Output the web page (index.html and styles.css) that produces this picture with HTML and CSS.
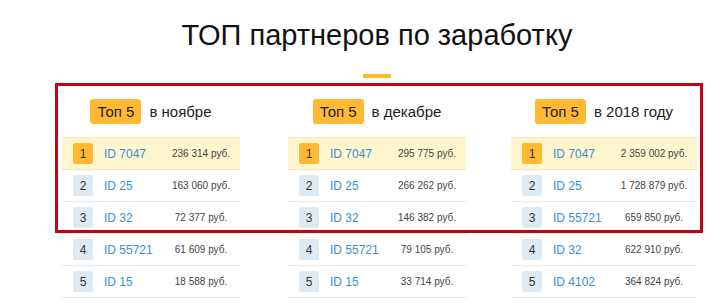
FILE: index.html
```html
<!DOCTYPE html>
<html lang="ru">
<head>
<meta charset="utf-8">
<title>ТОП партнеров по заработку</title>
<link rel="stylesheet" href="styles.css">
</head>
<body>
<div class="page">
  <h1 class="title">ТОП партнеров по заработку</h1>
  <div class="title-bar"></div>
  <div class="boards">
    <div class="board board--a">
      <div class="board-head"><span class="badge">Топ 5</span><span class="period">в ноябре</span></div>
      <div class="rows rows--a">
        <div class="row row--first"><span class="num num--gold">1</span><a class="pid">ID 7047</a><span class="sum">236 314 руб.</span></div>
        <div class="row"><span class="num">2</span><a class="pid">ID 25</a><span class="sum">163 060 руб.</span></div>
        <div class="row"><span class="num">3</span><a class="pid">ID 32</a><span class="sum">72 377 руб.</span></div>
        <div class="row"><span class="num">4</span><a class="pid">ID 55721</a><span class="sum">61 609 руб.</span></div>
        <div class="row"><span class="num">5</span><a class="pid">ID 15</a><span class="sum">18 588 руб.</span></div>
      </div>
    </div>
    <div class="board board--b">
      <div class="board-head"><span class="badge">Топ 5</span><span class="period">в декабре</span></div>
      <div class="rows rows--b">
        <div class="row row--first"><span class="num num--gold">1</span><a class="pid">ID 7047</a><span class="sum">295 775 руб.</span></div>
        <div class="row"><span class="num">2</span><a class="pid">ID 25</a><span class="sum">266 262 руб.</span></div>
        <div class="row"><span class="num">3</span><a class="pid">ID 32</a><span class="sum">146 382 руб.</span></div>
        <div class="row"><span class="num">4</span><a class="pid">ID 55721</a><span class="sum">79 105 руб.</span></div>
        <div class="row"><span class="num">5</span><a class="pid">ID 15</a><span class="sum">33 714 руб.</span></div>
      </div>
    </div>
    <div class="board board--c">
      <div class="board-head"><span class="badge">Топ 5</span><span class="period">в 2018 году</span></div>
      <div class="rows rows--c">
        <div class="row row--first"><span class="num num--gold">1</span><a class="pid">ID 7047</a><span class="sum">2 359 002 руб.</span></div>
        <div class="row"><span class="num">2</span><a class="pid">ID 25</a><span class="sum">1 728 879 руб.</span></div>
        <div class="row"><span class="num">3</span><a class="pid">ID 55721</a><span class="sum">659 850 руб.</span></div>
        <div class="row"><span class="num">4</span><a class="pid">ID 32</a><span class="sum">622 910 руб.</span></div>
        <div class="row"><span class="num">5</span><a class="pid">ID 4102</a><span class="sum">364 824 руб.</span></div>
      </div>
    </div>
  </div>
  <div class="highlight"></div>
</div>
</body>
</html>
```

FILE: styles.css
```css
html, body {
  margin: 0;
  padding: 0;
  background: #ffffff;
}

body {
  font-family: "Liberation Sans", Arial, sans-serif;
  color: #333333;
}

.page {
  position: relative;
  width: 646px;
  margin-left: 54px;
  padding-top: 19px;
}

.title {
  margin: 0;
  font-size: 29px;
  line-height: 32px;
  font-weight: normal;
  text-align: center;
  color: #111111;
}

.title-bar {
  width: 28px;
  height: 4px;
  margin: 23px auto 0;
  background: #ffb933;
}

.boards {
  display: grid;
  grid-template-columns: 226px 223px 186px;
  padding-left: 8px;
  margin-top: 21px;
}

.board--a .rows,
.board--b .rows {
  width: 178px;
}

.board--c .rows {
  width: 186px;
}

.board-head {
  display: flex;
  align-items: center;
  justify-content: center;
  gap: 8px;
  height: 25px;
}

.board--a .board-head,
.board--b .board-head {
  width: 178px;
}

.board--c .board-head {
  width: 186px;
}

.badge {
  display: inline-flex;
  align-items: center;
  justify-content: center;
  height: 25px;
  padding: 0 7px;
  border-radius: 3px;
  background: #ffb933;
  font-size: 15px;
  color: #222222;
}

.period {
  font-size: 15px;
  color: #222222;
}

.rows {
  margin-top: 13px;
}

.row {
  display: flex;
  align-items: center;
  height: 31px;
  border-bottom: 1px solid #e8e8e8;
}

.row--first {
  background: #fff5cf;
  border-top: 1px solid #fae6a6;
  border-bottom-color: #fae6a6;
}

.num {
  flex: none;
  width: 20px;
  height: 21px;
  margin-left: 11px;
  border-radius: 2px;
  background: #dfe9f1;
  display: flex;
  align-items: center;
  justify-content: center;
  font-size: 12px;
  color: #333333;
}

.num--gold {
  background: #ffb933;
}

.pid {
  flex: none;
  width: 58px;
  margin-left: 11px;
  font-size: 12px;
  color: #3b8fd0;
  text-decoration: none;
  white-space: nowrap;
}

.sum {
  flex: 1;
  text-align: center;
  font-size: 10px;
  color: #444444;
  white-space: nowrap;
}

.highlight {
  position: absolute;
  left: 1px;
  top: 83px;
  width: 648px;
  height: 150px;
  box-sizing: border-box;
  border: 3px solid #c20016;
  pointer-events: none;
}
```
